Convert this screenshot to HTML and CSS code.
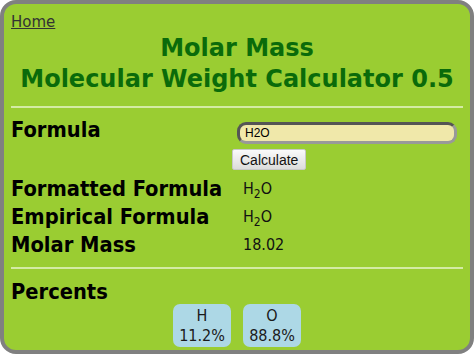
FILE: index.html
```html
<!DOCTYPE html>
<html lang="en">
  <head>
    <meta charset="UTF-8" />
    <title>Molar Mass Calculator</title>
    <link rel="stylesheet" href="styles.css">
  </head>
  <body>
    <div class="calc">
      <a class="home" href="#">Home</a>
      <h1>Molar Mass<br />Molecular Weight Calculator 0.5</h1>
      <hr />

      <div class="rows">
        <div class="label">Formula</div>
        <div class="entry">
          <input type="text" id="formula" value="H2O" />
          <button id="calc">Calculate</button>
        </div>

        <div class="label">Formatted Formula</div>
        <div class="value">H<sub>2</sub>O</div>

        <div class="label">Empirical Formula</div>
        <div class="value">H<sub>2</sub>O</div>

        <div class="label">Molar Mass</div>
        <div class="value">18.02</div>
      </div>

      <hr />

      <h2>Percents</h2>
      <div class="percents">
        <div class="pct"><span>H</span><span>11.2%</span></div>
        <div class="pct"><span>O</span><span>88.8%</span></div>
      </div>
    </div>
  </body>
</html>
```

FILE: styles.css
```css
* {
  box-sizing: border-box;
}

body {
  margin: 0;
  background: #fff;
  font-family: "DejaVu Sans Condensed", "DejaVu Sans", sans-serif;
}

.calc {
  width: 474px;
  height: 354px;
  background: #9acd32;
  border: 4px solid #808080;
  border-radius: 16px;
  padding: 8px 7px 0 7px;
}

.home {
  display: inline-block;
  color: #333;
  font-family: "DejaVu Sans", sans-serif;
  font-size: 15px;
  line-height: 18px;
}

h1 {
  margin: 2px 0 0;
  text-align: center;
  color: #0a6b0a;
  font-family: "DejaVu Sans", sans-serif;
  font-size: 24px;
  line-height: 31px;
}

hr {
  border: none;
  border-top: 2px solid #d4eba4;
  margin: 11px 0 10px;
}

.rows {
  display: grid;
  grid-template-columns: 221px 1fr;
  row-gap: 5px;
}

.label {
  font-weight: bold;
  font-size: 21.7px;
  line-height: 23px;
}

.entry {
  display: flex;
  flex-direction: column;
  align-items: flex-start;
  gap: 5px;
  padding-top: 4px;
  margin-bottom: 2px;
}

.entry input {
  margin-left: 5px;
  width: 220px;
  height: 22px;
  padding: 0 5px;
  background: #f0e8aa;
  border: 3px solid #555;
  border-right-color: #999;
  border-bottom-color: #999;
  border-radius: 9px;
  font-family: "Liberation Sans", Arial, sans-serif;
  font-size: 12px;
}

.entry button {
  height: 21px;
  padding: 0 7px;
  background: linear-gradient(#fafafa, #dcdcdc);
  border: 1px solid #c8c8c8;
  border-radius: 2px;
  font-family: "Liberation Sans", Arial, sans-serif;
  font-size: 14px;
  color: #111;
}

.value {
  padding-left: 11px;
  font-size: 16px;
  line-height: 23px;
  color: #111;
}

.value sub {
  font-size: 12px;
  line-height: 0;
}

h2 {
  margin: 0;
  font-size: 21.7px;
  line-height: 25px;
}

.percents {
  display: flex;
  justify-content: center;
  gap: 12px;
}

.pct {
  display: flex;
  flex-direction: column;
  align-items: center;
  width: 58px;
  padding: 2px 0 1px;
  background: #add8e6;
  border-radius: 7px;
  font-size: 16px;
  line-height: 20px;
  color: #1a1a1a;
}
```
